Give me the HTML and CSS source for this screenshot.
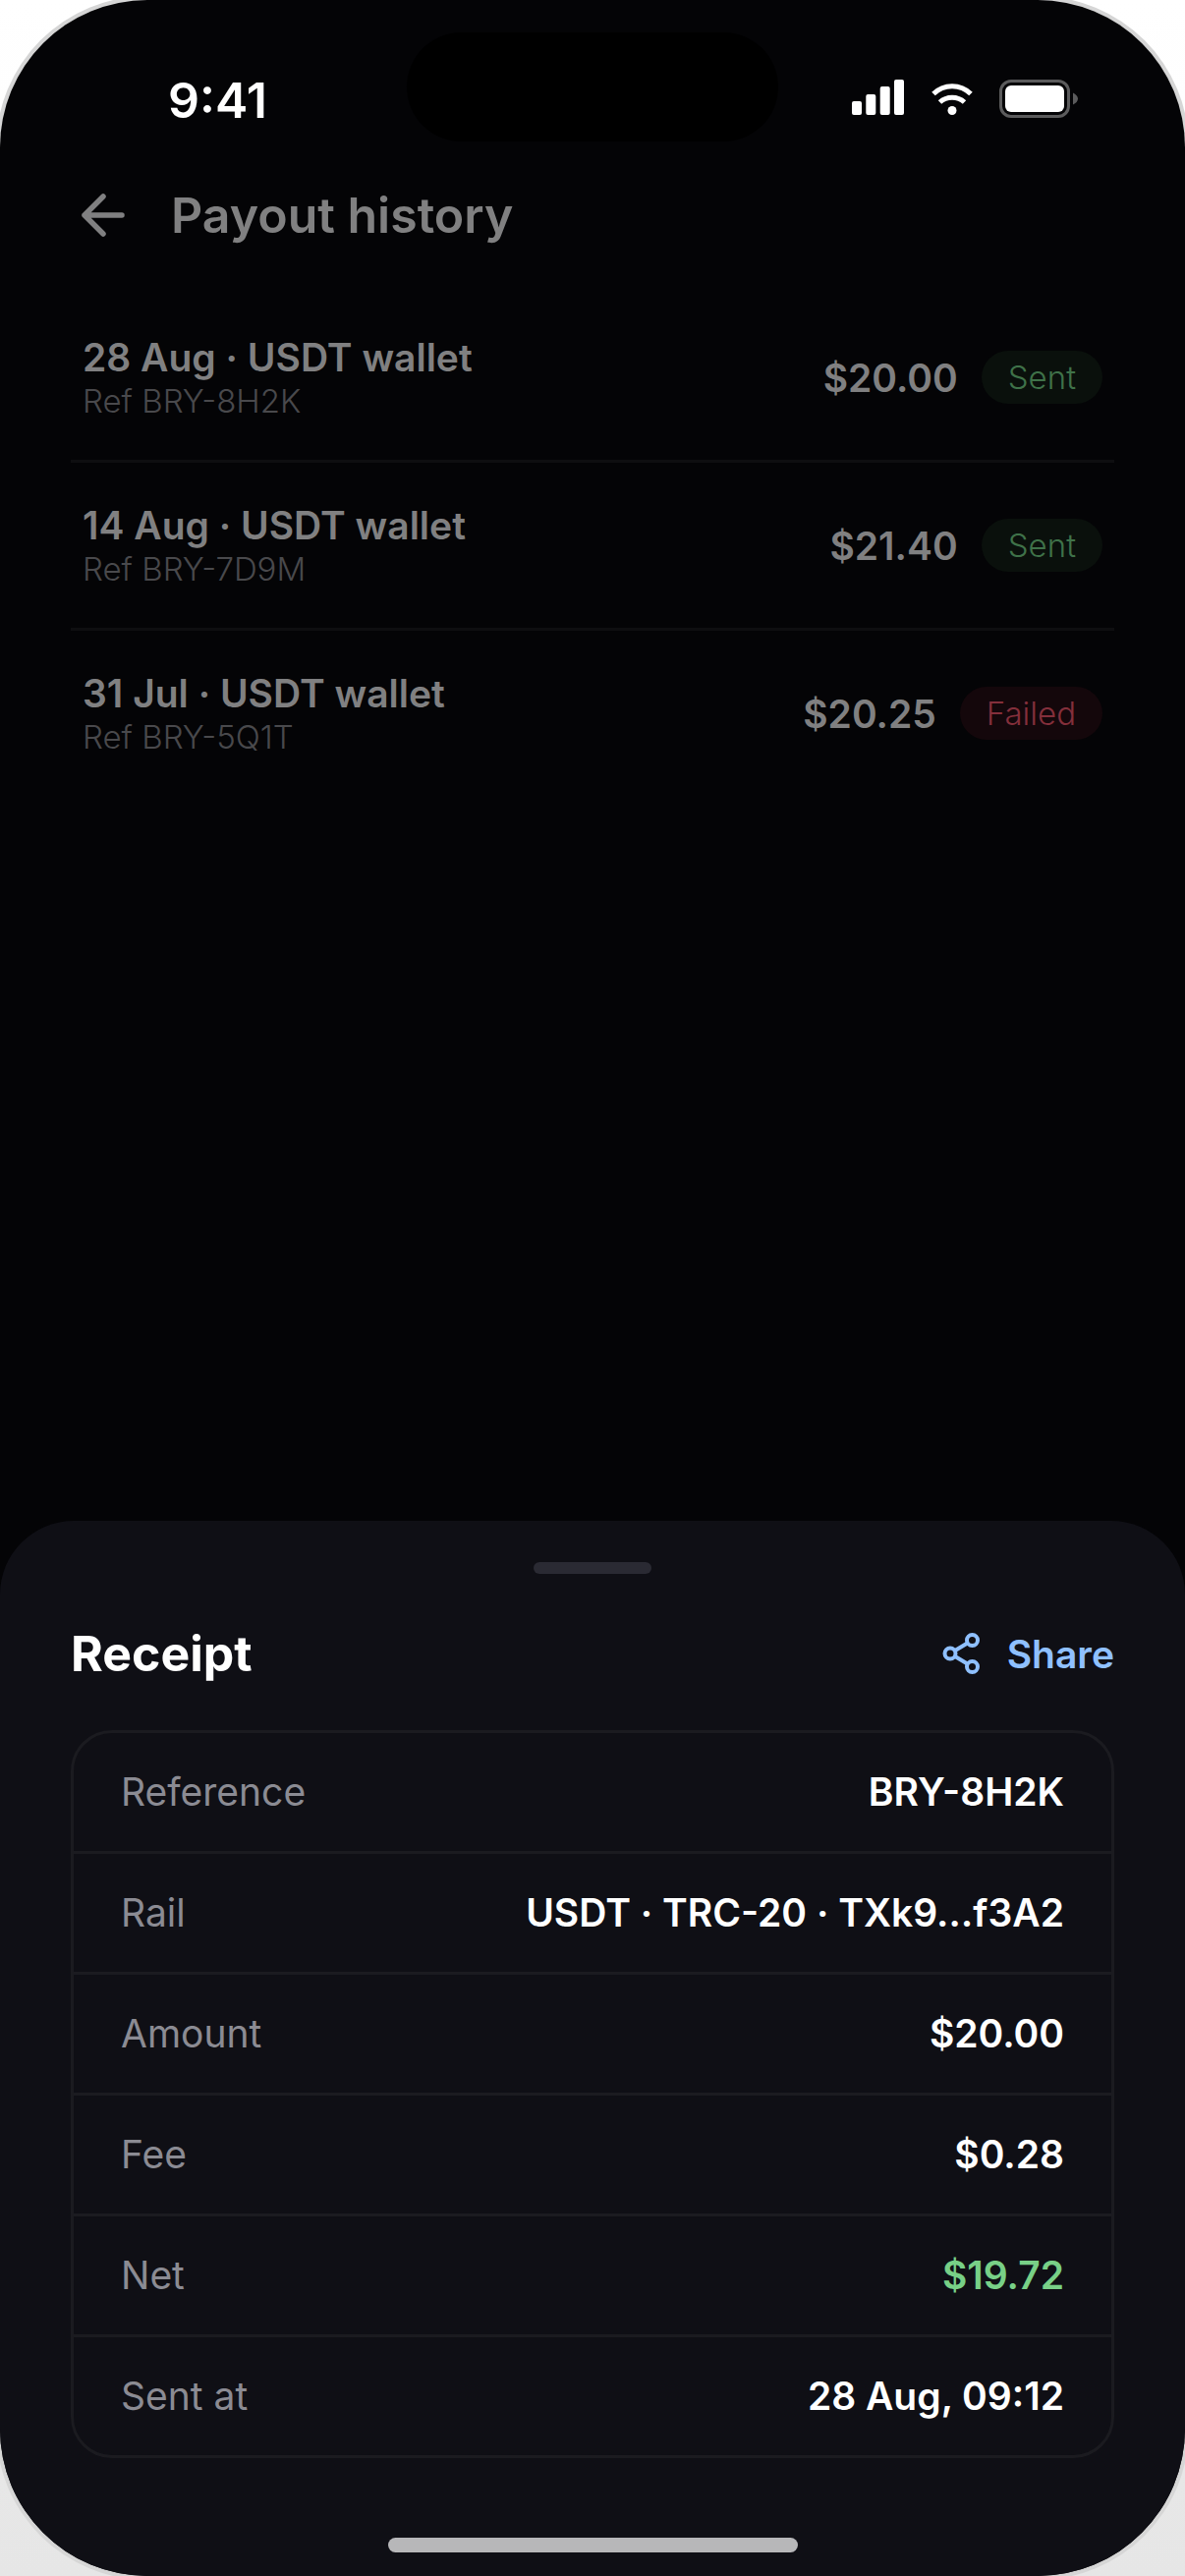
FILE: index.html
```html
<!DOCTYPE html>
<html lang="en">
<head>
    <meta charset="UTF-8">
    <meta name="viewport" content="width=device-width, initial-scale=1.0">
    <title>Payout history</title>
    <link rel="stylesheet" href="styles.css">
</head>
<body>
    <div class="phone">
        <div class="status-bar">
            <span class="time">9:41</span>
            <div class="island"></div>
            <div class="status-icons">
                <svg width="54" height="36" viewBox="0 0 54 36" fill="#fff">
                    <rect x="0" y="22" width="10" height="14" rx="2"/>
                    <rect x="14.300" y="15" width="10" height="21" rx="2"/>
                    <rect x="28.700" y="7" width="10" height="29" rx="2"/>
                    <rect x="43" y="0" width="10" height="36" rx="2"/>
                </svg>
                <svg width="42" height="36" viewBox="0 0 42 36" fill="none" stroke="#fff" stroke-width="5">
                    <path d="M2 14.500C12.500 4 29.500 4 40 14.500"/>
                    <path d="M8.500 23C15.500 16.500 26.500 16.500 33.500 23"/>
                    <circle cx="21" cy="31.500" r="4.500" fill="#fff" stroke="none"/>
                </svg>
                <svg width="81" height="39" viewBox="0 0 81 39">
                    <rect x="1.500" y="1.500" width="69" height="36" rx="10.500" fill="none" stroke="#5b5b5c" stroke-width="3"/>
                    <rect x="6" y="6" width="60" height="27" rx="6" fill="#fff"/>
                    <path d="M75 13.500C78 15 80 17 80 19.500S78 24 75 25.500Z" fill="#5b5b5c"/>
                </svg>
            </div>
        </div>

        <div class="history">
            <header class="topbar">
                <button class="back" type="button" aria-label="Back">
                    <svg width="48" height="48" viewBox="0 0 48 48" fill="none" stroke="currentColor" stroke-width="5.500" stroke-linecap="round" stroke-linejoin="round">
                        <path d="M43 24H5M24 5L5 24L24 43"/>
                    </svg>
                </button>
                <h1>Payout history</h1>
            </header>
            <ul class="payouts">
                <li class="payout">
                    <div class="payout-info">
                        <div class="payout-title">28 Aug · USDT wallet</div>
                        <div class="payout-ref">Ref BRY-8H2K</div>
                    </div>
                    <span class="amount">$20.00</span>
                    <span class="badge sent">Sent</span>
                </li>
                <li class="payout">
                    <div class="payout-info">
                        <div class="payout-title">14 Aug · USDT wallet</div>
                        <div class="payout-ref">Ref BRY-7D9M</div>
                    </div>
                    <span class="amount">$21.40</span>
                    <span class="badge sent">Sent</span>
                </li>
                <li class="payout">
                    <div class="payout-info">
                        <div class="payout-title">31 Jul · USDT wallet</div>
                        <div class="payout-ref">Ref BRY-5Q1T</div>
                    </div>
                    <span class="amount">$20.25</span>
                    <span class="badge failed">Failed</span>
                </li>
            </ul>
        </div>

        <section class="sheet">
            <div class="handle"></div>
            <div class="sheet-header">
                <h2>Receipt</h2>
                <button class="share" type="button">
                    <svg width="39" height="42" viewBox="0 0 39 42" fill="none" stroke="currentColor" stroke-width="4">
                        <circle cx="30.500" cy="7.500" r="5.500"/>
                        <circle cx="8" cy="21" r="5.500"/>
                        <circle cx="30.500" cy="34.500" r="5.500"/>
                        <path d="M13 18L25.500 10.500M13 24L25.500 31.500"/>
                    </svg>
                    Share
                </button>
            </div>
            <dl class="receipt">
                <div class="receipt-row"><dt>Reference</dt><dd>BRY-8H2K</dd></div>
                <div class="receipt-row"><dt>Rail</dt><dd>USDT · TRC-20 · TXk9…f3A2</dd></div>
                <div class="receipt-row"><dt>Amount</dt><dd>$20.00</dd></div>
                <div class="receipt-row"><dt>Fee</dt><dd>$0.28</dd></div>
                <div class="receipt-row"><dt>Net</dt><dd class="net">$19.72</dd></div>
                <div class="receipt-row"><dt>Sent at</dt><dd>28 Aug, 09:12</dd></div>
            </dl>
            <div class="home-indicator"></div>
        </section>
    </div>
</body>
</html>
```
FILE: styles.css
```css
* {
    box-sizing: border-box;
}
body {
    margin: 0;
    font-family: Inter, "Liberation Sans", sans-serif;
    font-size: 39px;
    background: linear-gradient(#fff, #e6e6e6);
}
h1, h2, ul, dl, dd {
    margin: 0;
    padding: 0;
}
button {
    border: none;
    background: none;
    padding: 0;
    font: inherit;
    cursor: pointer;
}
svg {
    display: block;
}
.phone {
    display: flex;
    flex-direction: column;
    min-height: 100vh;
    background: #040406;
    border-radius: 150px;
    box-shadow: 0 0 0 4px #d6d6d6;
    overflow: hidden;
}

/* status bar */
.status-bar {
    display: grid;
    grid-template-columns: 1fr 378px 1fr;
    padding: 33px 0 0;
}
.time {
    padding-left: 171px;
    padding-top: 36px;
    font-size: 50px;
    line-height: 66px;
    font-weight: 600;
    color: #fff;
}
.island {
    height: 111px;
    border-radius: 56px;
    background: #000;
}
.status-icons {
    display: flex;
    justify-content: flex-end;
    gap: 27px;
    padding: 48px 108px 0 0;
}

/* dimmed page behind the sheet */
.history {
    flex: 1;
    padding: 36px 72px 0;
    color: #808081;
}
.topbar {
    display: flex;
    align-items: center;
    gap: 45px;
    padding-left: 9px;
    height: 78px;
}
.back {
    color: inherit;
}
h1, h2 {
    font-size: 50px;
    line-height: 60px;
    font-weight: 600;
}
.payouts {
    list-style: none;
    padding-top: 42px;
}
.payout {
    display: flex;
    align-items: center;
    gap: 24px;
    padding: 40px 12px;
}
.payout + .payout {
    border-top: 3px solid #0e0e10;
}
.payout-info {
    flex: 1;
}
.payout-title {
    line-height: 48px;
    font-weight: 600;
}
.payout-ref {
    font-size: 33px;
    line-height: 40px;
    font-weight: 300;
    color: #49494c;
}
.amount {
    font-weight: 600;
}
.badge {
    padding: 0 27px;
    border-radius: 27px;
    font-size: 33px;
    line-height: 54px;
    font-weight: 300;
}
.sent {
    background: #0a100c;
    color: #3f7249;
}
.failed {
    background: #14070b;
    color: #842f3b;
}

/* receipt sheet */
.sheet {
    padding: 42px 72px 24px;
    background: #0f0f15;
    border-radius: 75px 75px 0 0;
}
.handle {
    width: 120px;
    height: 12px;
    margin: 0 auto;
    border-radius: 6px;
    background: #2a2a33;
}
.sheet-header {
    display: flex;
    justify-content: space-between;
    align-items: center;
    height: 72px;
    margin: 45px 0 42px;
}
h2 {
    font-weight: 700;
    color: #fff;
}
.share {
    display: flex;
    align-items: center;
    gap: 27px;
    font-weight: 600;
    color: #8fc0ff;
}
.receipt {
    border: 3px solid #1b1b20;
    border-radius: 42px;
}
.receipt-row {
    display: flex;
    justify-content: space-between;
    padding: 0 48px;
    line-height: 120px;
}
.receipt-row + .receipt-row {
    border-top: 3px solid #1b1b20;
}
dt {
    color: #8b8b93;
}
dd {
    font-weight: 600;
    color: #fff;
}
.receipt .net {
    color: #78d087;
}
.home-indicator {
    width: 417px;
    height: 15px;
    margin: 81px auto 0;
    border-radius: 8px;
    background: #b7b7b9;
}
```
